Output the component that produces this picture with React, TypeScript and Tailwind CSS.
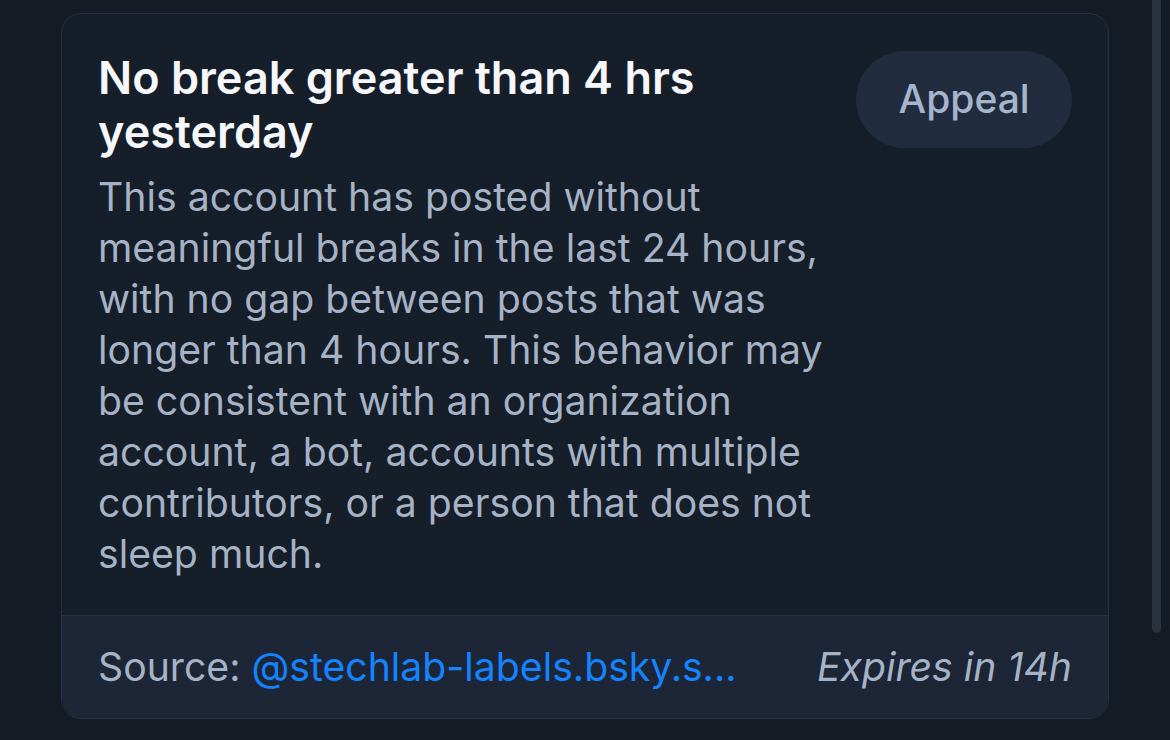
export default function App() {
  return (
    <div
      className="relative h-[740px] w-[1170px] overflow-hidden bg-[#151b24]"
      style={{ fontFamily: 'Inter, "Noto Sans", sans-serif' }}
    >
      <div className="absolute right-[9px] top-0 h-[633px] w-[9px] rounded-b-full bg-[#2a323d]" />
      <div className="pl-[61px] pr-[61px] pt-[13px]">
        <div className="overflow-hidden rounded-[20px] border border-[#243244] bg-[#161e29]">
          <div className="flex items-start gap-[24px] px-[36px] pb-[36px] pt-[37px]">
            <div className="w-[735px]">
              <h2 className="text-[45px] font-semibold leading-[54px] text-[#f5f7fa]">
                No break greater than 4 hrs yesterday
              </h2>
              <p className="mt-[12px] text-[39.2px] leading-[51px] text-[#a6b3c6]">
                This account has posted without meaningful breaks in the last 24 hours, with no gap between posts
                that was longer than 4 hours. This behavior may be consistent with an organization account, a bot,
                accounts with multiple contributors, or a person that does not sleep much.
              </p>
            </div>
            <button className="flex h-[97px] w-[216px] items-center justify-center rounded-full bg-[#212d3e] text-[39px] font-medium text-[#a6b5cc]">
              Appeal
            </button>
          </div>
          <div className="flex h-[103px] items-center justify-between border-t border-[#243244] bg-[#1c2636] px-[36px] pb-[2px]">
            <p className="text-[39.2px] leading-[51px] text-[#a6b3c6]">
              Source: <span className="text-[#1483fd]">@stechlab-labels.bsky.s...</span>
            </p>
            <p className="text-[39.2px] italic leading-[51px] text-[#a6b3c6]">Expires in 14h</p>
          </div>
        </div>
      </div>
    </div>
  )
}
